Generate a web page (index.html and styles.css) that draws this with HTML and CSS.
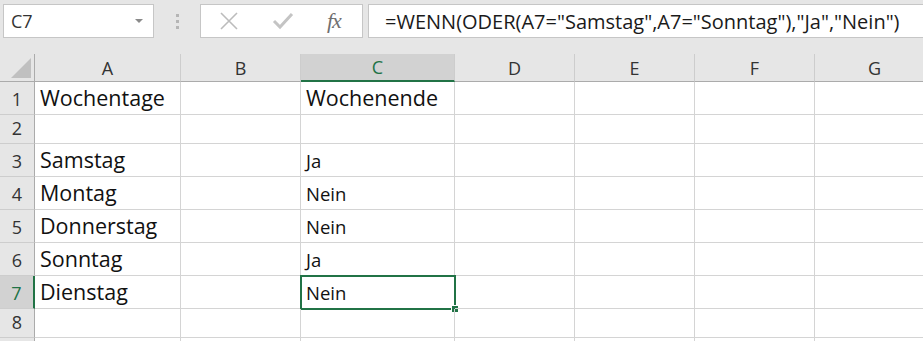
FILE: index.html
```html
<!DOCTYPE html>
<html lang="de">
<head>
<meta charset="utf-8">
<title>Excel – WENN ODER</title>
<link rel="stylesheet" href="styles.css">
</head>
<body>
<div class="app">
  <div class="toolbar">
    <div class="namebox"><span class="ref">C7</span><span class="caret"></span></div>
    <div class="grip"><i></i><i></i><i></i></div>
    <div class="fxbox">
      <svg class="ico" width="20" height="20" viewBox="0 0 20 20"><path d="M2 2 L18 18 M18 2 L2 18" stroke="#bcbcbc" stroke-width="1.6" fill="none"/></svg>
      <svg class="ico" width="22" height="18" viewBox="0 0 22 18"><path d="M2 9 L8 15 L20 2" stroke="#c4c4c4" stroke-width="3" fill="none"/></svg>
      <span class="fx">fx</span>
    </div>
    <div class="formula">=WENN(ODER(A7="Samstag",A7="Sonntag"),"Ja","Nein")</div>
  </div>
  <div class="sheet">
    <div class="corner"><span class="tri"></span></div>
    <div class="ch">A</div><div class="ch">B</div><div class="ch sel">C</div><div class="ch">D</div><div class="ch">E</div><div class="ch">F</div><div class="ch">G</div>

    <div class="rh">1</div><div class="c big">Wochentage</div><div class="c"></div><div class="c big">Wochenende</div><div class="c"></div><div class="c"></div><div class="c"></div><div class="c"></div>
    <div class="rh">2</div><div class="c"></div><div class="c"></div><div class="c"></div><div class="c"></div><div class="c"></div><div class="c"></div><div class="c"></div>
    <div class="rh">3</div><div class="c big">Samstag</div><div class="c"></div><div class="c">Ja</div><div class="c"></div><div class="c"></div><div class="c"></div><div class="c"></div>
    <div class="rh">4</div><div class="c big">Montag</div><div class="c"></div><div class="c">Nein</div><div class="c"></div><div class="c"></div><div class="c"></div><div class="c"></div>
    <div class="rh">5</div><div class="c big">Donnerstag</div><div class="c"></div><div class="c">Nein</div><div class="c"></div><div class="c"></div><div class="c"></div><div class="c"></div>
    <div class="rh">6</div><div class="c big">Sonntag</div><div class="c"></div><div class="c">Ja</div><div class="c"></div><div class="c"></div><div class="c"></div><div class="c"></div>
    <div class="rh sel">7</div><div class="c big">Dienstag</div><div class="c"></div><div class="c active">Nein<span class="selbox"><span class="handle"></span></span></div><div class="c"></div><div class="c"></div><div class="c"></div><div class="c"></div>
    <div class="rh">8</div><div class="c"></div><div class="c"></div><div class="c"></div><div class="c"></div><div class="c"></div><div class="c"></div><div class="c"></div>
    <div class="rh"></div><div class="c"></div><div class="c"></div><div class="c"></div><div class="c"></div><div class="c"></div><div class="c"></div><div class="c"></div>
  </div>
</div>
</body>
</html>
```

FILE: styles.css
```css
html, body {
  margin: 0;
  padding: 0;
  background: #ffffff;
  overflow: hidden;
}
.app {
  width: 923px;
  height: 341px;
  overflow: hidden;
  font-family: "Open Sans", "Noto Sans", sans-serif;
  color: #1a1a1a;
}
.toolbar {
  display: flex;
  align-items: flex-start;
  height: 54px;
  box-sizing: border-box;
  padding: 4px 0 0 3px;
  background: #e6e6e6;
}
.namebox {
  width: 151px;
  height: 34px;
  box-sizing: border-box;
  background: #fff;
  border: 1px solid #c6c6c6;
  display: flex;
  align-items: center;
  justify-content: space-between;
  padding: 0 10px 0 7px;
}
.ref {
  font-size: 18px;
  color: #333;
}
.caret {
  width: 0;
  height: 0;
  border-left: 4px solid transparent;
  border-right: 4px solid transparent;
  border-top: 4px solid #8a8a8a;
}
.grip {
  width: 46px;
  height: 34px;
  display: flex;
  flex-direction: column;
  align-items: center;
  justify-content: center;
  gap: 3px;
}
.grip i {
  width: 3px;
  height: 3px;
  background: #b5b5b5;
}
.fxbox {
  width: 163px;
  height: 34px;
  box-sizing: border-box;
  background: #fff;
  border: 1px solid #c6c6c6;
  display: flex;
  align-items: center;
  padding: 0 0 0 18px;
}
.fxbox .ico {
  display: block;
}
.fxbox .ico + .ico {
  margin-left: 33px;
}
.fx {
  margin-left: 33px;
  font-family: "Liberation Serif", "DejaVu Serif", serif;
  font-style: italic;
  font-size: 22px;
  color: #707070;
  letter-spacing: -1px;
}
.formula {
  flex: 1;
  margin-left: 5px;
  height: 34px;
  box-sizing: border-box;
  background: #fff;
  border: 1px solid #c6c6c6;
  border-right: none;
  padding: 0 0 0 16px;
  display: flex;
  align-items: center;
  font-size: 20px;
  color: #1a1a1a;
  white-space: nowrap;
}
.sheet {
  display: grid;
  grid-template-columns: 35px 146px 120px 154px 120px 120px 120px 120px;
  grid-template-rows: 28px 33px 29px 33px 33px 33px 33px 33px 29px 33px;
}
.corner {
  background: #e6e6e6;
  border-right: 1px solid #ababab;
  border-bottom: 1px solid #ababab;
  position: relative;
}
.tri {
  position: absolute;
  right: 3px;
  bottom: 3px;
  width: 0;
  height: 0;
  border-left: 20px solid transparent;
  border-bottom: 20px solid #c0c0c0;
}
.ch {
  background: #e6e6e6;
  border-right: 1px solid #cdcdcd;
  border-bottom: 1px solid #ababab;
  display: flex;
  align-items: center;
  justify-content: center;
  font-size: 18px;
  color: #333;
}
.ch.sel {
  background: #d2d2d2;
  color: #217346;
  border-bottom: 2px solid #217346;
}
.rh {
  background: #e6e6e6;
  border-right: 1px solid #ababab;
  border-bottom: 1px solid #cdcdcd;
  display: flex;
  align-items: flex-end;
  justify-content: center;
  padding-bottom: 3px;
  box-sizing: border-box;
  font-size: 18px;
  color: #333;
}
.rh.sel {
  background: #d2d2d2;
  color: #217346;
  border-right: 2px solid #217346;
}
.c {
  border-right: 1px solid #d4d4d4;
  border-bottom: 1px solid #d4d4d4;
  display: flex;
  align-items: flex-end;
  padding: 0 0 3px 5px;
  box-sizing: border-box;
  font-size: 18.5px;
  color: #111;
  white-space: nowrap;
  position: relative;
}
.c.big {
  font-size: 21.5px;
  padding-bottom: 2px;
}
.selbox {
  position: absolute;
  left: -1px;
  top: -1px;
  right: -2px;
  bottom: -2px;
  border: 2px solid #217346;
}
.handle {
  position: absolute;
  right: -5px;
  bottom: -5px;
  width: 6px;
  height: 6px;
  background: #217346;
  border: 1px solid #fff;
}
```
